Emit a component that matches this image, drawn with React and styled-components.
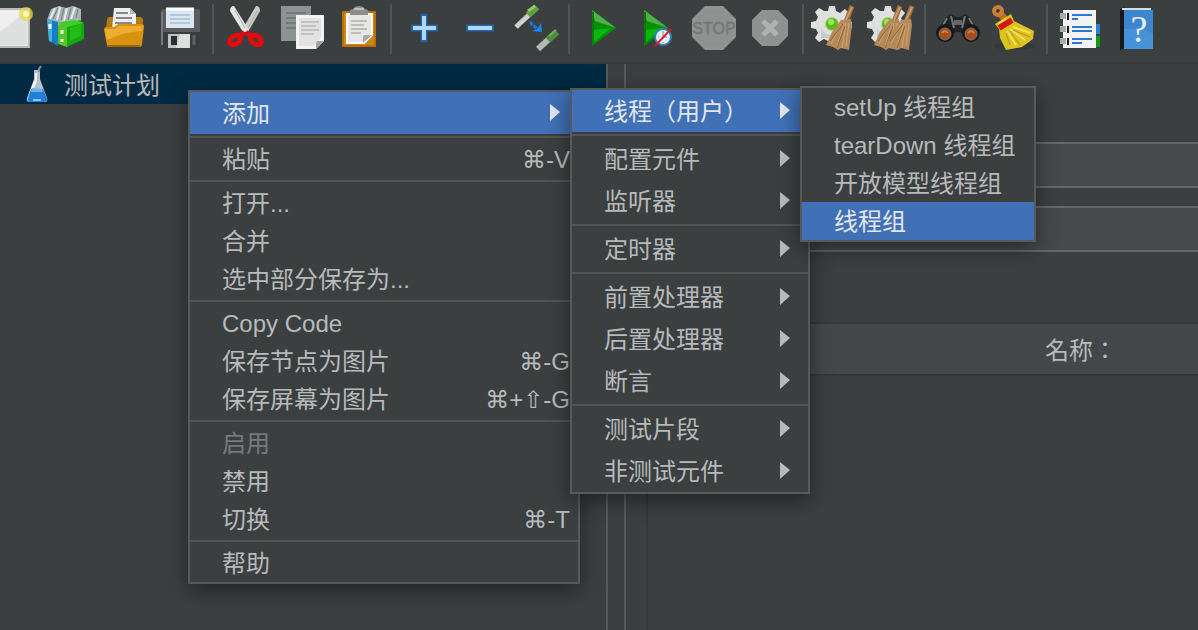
import React from 'react'
import styled, { createGlobalStyle } from 'styled-components'

const GlobalStyle = createGlobalStyle`
  * {
    box-sizing: border-box;
  }

  body {
    margin: 0;
    overflow: hidden;
    background: #3b3f40;
    color: #b7b9ba;
    font-family: "Liberation Sans", "Noto Sans CJK SC", "DejaVu Sans", sans-serif;
    font-size: 24px;
  }
`

const Window = styled.div`
  display: flex;
  flex-direction: column;
  min-height: 100vh;
`

const Toolbar = styled.header`
  display: flex;
  align-items: flex-start;
  height: 64px;
  margin-left: -16px;
  border-bottom: 2px solid #36393a;
`

const ToolButton = styled.button`
  flex: none;
  width: 56px;
  height: 56px;
  padding: 0;
  border: none;
  background: none;

  svg {
    display: block;
  }
`

const ToolDivider = styled.span`
  flex: none;
  width: 2px;
  height: 50px;
  margin: 4px 4px 0;
  background: #515556;
`

const Workspace = styled.div`
  display: flex;
  flex: 1;
`

const TreePane = styled.aside`
  flex: none;
  width: 606px;
`

const TreeRow = styled.div`
  display: flex;
  align-items: center;
  gap: 14px;
  height: 40px;
  padding-left: 24px;
  background: #012a42;

  svg {
    display: block;
  }
`

const TreeLabel = styled.span`
  padding-top: 4px;
  line-height: 36px;
`

const Splitter = styled.div`
  flex: none;
  width: 20px;
  border: solid #565a5b;
  border-width: 0 2px;
`

const Editor = styled.main`
  display: flex;
  flex: 1;
  flex-direction: column;
  min-width: 0;
  padding: 78px 0 0 20px;
`

const Fields = styled.div`
  display: flex;
  flex-direction: column;
  gap: 18px;
  margin-bottom: 70px;
  padding-left: 130px;
`

const Field = styled.input`
  width: 100%;
  height: 46px;
  border: solid #646869;
  border-width: 2px 0 2px 2px;
  outline: none;
  background: #45494a;
  color: inherit;
  font: inherit;
`

const TableFrame = styled.div`
  flex: 1;
  border-left: 2px solid #34383a;
`

const Table = styled.table`
  width: 100%;
  border-collapse: collapse;
`

const HeadCell = styled.th`
  height: 52px;
  padding: 4px 81px 0 0;
  border: solid #34383a;
  border-width: 2px 0;
  background: #44474a;
  font-family: "Liberation Sans", "Noto Sans CJK TC", sans-serif;
  font-weight: 400;
  line-height: 44px;
  text-align: right;
`

const Popup = styled.ul`
  position: absolute;
  top: ${({ $top }) => $top}px;
  left: ${({ $left }) => $left}px;
  width: ${({ $width }) => $width}px;
  margin: 0;
  padding: 0;
  border: 2px solid #565a5b;
  background: #3b3f40;
  box-shadow: 0 6px 20px rgba(0, 0, 0, 0.45);
  list-style: none;
`

const MenuButton = styled.button`
  display: flex;
  align-items: center;
  justify-content: space-between;
  width: 100%;
  height: ${({ $tall }) => ($tall ? 42 : 38)}px;
  padding: 0 8px 0 32px;
  border: none;
  background: ${({ $selected }) => ($selected ? '#4070b5' : 'none')};
  color: ${({ $selected }) => ($selected ? '#e2e6ec' : '#b7b9ba')};
  font: inherit;
  white-space: nowrap;

  &:disabled {
    color: #777a7b;
  }
`

const MenuLabel = styled.span`
  padding-top: 2px;
  line-height: 36px;
`

const Shortcut = styled(MenuLabel)`
  font-family: "Liberation Sans", "DejaVu Sans", sans-serif;
`

const MenuDivider = styled.li`
  height: 2px;
  margin: 2px 0;
  background: #515556;
`

const Arrow = styled.svg`
  flex: none;
  margin-right: 10px;
`

const NewIcon = () => (
  <>
    <rect x="8" y="9" width="37" height="38" fill="#e9e9e9" />
    <path d="M8 9h37v38H8" fill="none" stroke="#b9bbb9" strokeWidth="2" />
    <path d="M10 11h33v34H10z" fill="#dedfdf" />
    <path d="M10 11h33L10 36z" fill="#efefef" />
    <circle cx="42" cy="14" r="7" fill="#e8d94c" opacity="0.75" />
    <circle cx="42" cy="14" r="3" fill="#fffbb0" />
  </>
)

const TemplatesIcon = () => (
  <>
    <path d="M7 20 11 9l8-3 7 2 7-2 8 3v15L20 30z" fill="#a9b4b6" />
    <path d="m10 19 5-11M17 20l3-13M24 21l3-13M31 19l4-12" stroke="#e5eaea" strokeWidth="2" />
    <path d="m13 19 5-11M21 20l3-12M28 20l3-12M36 18l2-9" stroke="#6f7c80" strokeWidth="1" />
    <path d="m7 19 11 3v24l-9-5z" fill="#147fc0" />
    <path d="m7 19 5 1v22l-3-1z" fill="#49aee0" />
    <path d="M10 24v5" stroke="#eef7fb" strokeWidth="3" />
    <path d="m18 25 9-4v26l-9-3z" fill="#56c32b" />
    <path d="m27 24 13-4 4 4v15l-17 8z" fill="#13a80e" />
    <path d="m18 23 16-3 10 3-17 4z" fill="#40cf27" />
    <path d="m30 28 11-4v12l-11 5z" fill="#24bd18" />
    <path d="M22 30v4M22 39v3" stroke="#e1fad5" strokeWidth="3" />
  </>
)

const OpenIcon = () => (
  <>
    <path d="M11 20q0-3 3-3h30q3 0 3 3l-1 16H9z" fill="#b77912" />
    <path d="M18 8h16l6 6v15H16z" fill="#eeeeee" />
    <path d="m34 8 6 6h-6z" fill="#b8b8b8" />
    <path d="M20 13h12M20 18h16M19 23h17" stroke="#888" strokeWidth="2" />
    <path d="M8 30q0-3 3-3h7l4-3h24q2 0 2 3l-2 17q0 3-3 3H14q-3 0-3-2z" fill="#d9920f" />
    <path d="M9 29h10l4-3h24l-1 5q-19 1-35 9z" fill="#ecad30" />
    <path d="M12 46h32" stroke="#9c6508" strokeWidth="2" />
  </>
)

const SaveIcon = () => (
  <>
    <path d="M10 9h36q2 0 2 2v35l-3 3H12l-3-3V11z" fill="#5a5c5f" />
    <path d="M9 32h39v14l-3 3H12l-3-3z" fill="#3a3c3f" />
    <path d="M10 12v33" stroke="#77797c" strokeWidth="2" />
    <path d="M14 9h28v19H14z" fill="#dce7ef" />
    <path d="M14 9h28" stroke="#fff" strokeWidth="3" />
    <path d="M18 15h20M18 19h20M18 23h20" stroke="#87aace" strokeWidth="1" />
    <rect x="16" y="34" width="22" height="14" fill="#bfc1c3" />
    <path d="M28 34h10v14H24z" fill="#dedfdf" />
    <rect x="19" y="36" width="6" height="9" fill="#2c2e30" />
    <path d="M42 35v10" stroke="#5e6062" strokeWidth="3" />
  </>
)

const CutIcon = () => (
  <>
    <path d="M38 6q4 0 4 5L30 32l-6-2z" fill="#c9ccc7" />
    <path d="M16 6q-4 0-4 5l13 21 6-2z" fill="#e5e7e3" />
    <path d="m17 10 11 20M39 11 30 28" stroke="#a7aca5" strokeWidth="1" />
    <path d="m21 36 6-4 7 4" fill="none" stroke="#d31010" strokeWidth="5" />
    <ellipse cx="17" cy="40" rx="6" ry="4" transform="rotate(-35 17 40)" fill="none" stroke="#e00d0d" strokeWidth="5" />
    <ellipse cx="38" cy="40" rx="6" ry="4" transform="rotate(35 38 40)" fill="none" stroke="#e00d0d" strokeWidth="5" />
    <circle cx="27" cy="30" r="2" fill="#eee" />
  </>
)

const CopyIcon = () => (
  <>
    <rect x="7" y="6" width="30" height="35" fill="#8f9292" />
    <path d="M12 13h20M12 18h20M12 23h20M12 28h20" stroke="#757878" strokeWidth="2" />
    <path d="M22 15h28v26l-8 8H22z" fill="#f2f2f2" />
    <path d="M25 18h22v20l-8 8H25z" fill="#e2e2e2" />
    <path d="M27 22h18M27 26h15M27 30h18M27 34h13" stroke="#a2a2a2" strokeWidth="1" />
    <path d="M42 49v-6q0-2 2-2h6z" fill="#a1a3a3" />
  </>
)

const PasteIcon = () => (
  <>
    <rect x="12" y="11" width="34" height="36" rx="1" fill="#b96f04" />
    <rect x="14" y="13" width="30" height="32" fill="#cf8614" />
    <path d="M17 14h25v21l-8 8H17z" fill="#e6e6e5" stroke="#fff" strokeWidth="2" />
    <path d="M21 21h16M21 25h13M21 29h16M21 33h10" stroke="#929292" strokeWidth="1" />
    <path d="M33 43v-6q0-2 2-2h7z" fill="#aaa" />
    <path d="M20 15v-4q0-2 3-2 2-3 6-3t6 3q3 0 3 2v4z" fill="#8d8e8a" />
    <path d="M24 9h10" stroke="#bdbeb9" strokeWidth="2" />
  </>
)

const ExpandIcon = () => (
  <>
    <path d="M28 14v28M15 28h27" stroke="#1d66a9" strokeWidth="7" />
    <path d="M28 16v24M17 28h23" stroke="#b4d6f1" strokeWidth="4" />
  </>
)

const CollapseIcon = () => (
  <>
    <path d="M14 28h28" stroke="#1d66a9" strokeWidth="7" />
    <path d="M16 28h24" stroke="#b4d6f1" strokeWidth="4" />
  </>
)

const ToggleIcon = () => (
  <>
    <path d="m8 27 14-13" stroke="#d0d2cf" strokeWidth="5" />
    <path d="m7 25 13-12" stroke="#a5a9a5" strokeWidth="1" />
    <path d="m20 15 9-8" stroke="#5f9e43" strokeWidth="7" />
    <path d="m20 11 7-5" stroke="#8dcb6e" strokeWidth="3" />
    <path d="m30 49 11-10" stroke="#b4b7b3" strokeWidth="6" />
    <path d="m40 40 9-8" stroke="#4e8c3b" strokeWidth="7" />
    <path d="m41 36 7-6" stroke="#70af55" strokeWidth="2" />
    <path d="m22 22 7 7" stroke="#187ce6" strokeWidth="3" strokeDasharray="4 1" />
    <path d="m33 23 1 9-10-1 5-2z" fill="#1684f5" />
  </>
)

const PlayShape = () => (
  <>
    <path d="M18 10 42 28 18 46z" fill="#078f0a" />
    <path d="m18 10 24 18-21-7z" fill="#50b047" />
    <path d="m20 30 17-2-17 14z" fill="#09b90b" />
    <path d="M19 12v32" stroke="#087b08" strokeWidth="2" />
  </>
)

const RunNoPauseIcon = () => (
  <>
    <g transform="translate(-4 0)">
      <PlayShape />
    </g>
    <circle cx="33" cy="37" r="8" fill="#e5f1f9" stroke="#2c81b9" strokeWidth="2" />
    <path d="M33 31v6h4M28 37h1M33 42v1" stroke="#70879a" strokeWidth="1" fill="none" />
    <path d="m25 46 16-17" stroke="#db2020" strokeWidth="2" />
  </>
)

const StopIcon = () => (
  <>
    <path d="M19 6h18l13 13v18L37 50H19L6 37V19z" fill="#8f9191" />
    <path d="M20 8h16l12 12v16L36 48H20L8 36V20z" fill="none" stroke="#979999" strokeWidth="1" />
    <text x="28" y="34" textAnchor="middle" fontSize="16" fill="#757777" stroke="#757777" strokeWidth="0.5">STOP</text>
  </>
)

const ShutdownIcon = () => (
  <>
    <path d="M20 10h16l10 10v16L36 46H20L10 36V20z" fill="#909292" />
    <path d="m21 21 14 14m0-14L21 35" stroke="#b0b2b2" strokeWidth="5" />
  </>
)

const GearShape = () => (
  <>
    <path
      d="m20 11 1-5h6l1 5 4 2 5-4 4 4-4 5 2 4h5v6l-5 1-2 4 3 5-4 4-4-3-5 2v5h-6l-1-5-4-2-5 3-4-4 3-5-2-4-5-1v-6l5-1 2-4-3-5 4-4 5 3z"
      fill="#dfe1df"
    />
    <path d="M13 28a12 12 0 0 0 22 0v10H13z" fill="#c9ccc9" />
    <circle cx="24" cy="24" r="7" fill="#b6c5a8" />
    <circle cx="24" cy="24" r="6" fill="#5dbc13" />
    <circle cx="23" cy="22" r="3" fill="#9be755" />
  </>
)

const BrushShape = () => (
  <>
    <path d="m38 22 6-16" stroke="#9a6b3e" strokeWidth="5" />
    <path d="m38 20 6-13" stroke="#c99c6c" strokeWidth="2" />
    <path d="m33 20 10-1 1 6-3 25-8-2-3 2-5-3-7-2 6-13z" fill="#b58a5a" />
    <path d="m33 24-10 20m13-21-7 24m9-24-4 25m7-25-3 23" stroke="#cda676" strokeWidth="1" />
    <path d="m35 24-13 17m15-15-8 22" stroke="#8f6339" strokeWidth="1" />
  </>
)

const ClearIcon = () => (
  <>
    <GearShape />
    <BrushShape />
  </>
)

const ClearAllIcon = () => (
  <>
    <GearShape />
    <g transform="translate(-8 0)">
      <BrushShape />
    </g>
    <g transform="translate(4 0)">
      <BrushShape />
    </g>
  </>
)

const SearchIcon = () => (
  <>
    <path d="m16 17 5-3 5 3h4l5-3 5 3 9 15-9 7-10-7h-4l-10 7-9-7z" fill="#202223" />
    <path d="m17 18-6 11M39 18l6 11M21 16l3 12M35 16l-3 12" stroke="#727678" strokeWidth="2" />
    <path d="M24 20h8v5h-8z" fill="#626668" />
    <circle cx="15" cy="33" r="9" fill="#17191a" />
    <circle cx="41" cy="33" r="9" fill="#17191a" />
    <circle cx="15" cy="34" r="6" fill="#a84e1d" stroke="#757575" strokeWidth="1" />
    <circle cx="41" cy="34" r="6" fill="#a84e1d" stroke="#757575" strokeWidth="1" />
    <path d="M12 33q3-4 6 0M38 33q3-4 6 0" stroke="#d07c3c" strokeWidth="2" fill="none" />
  </>
)

const BroomIcon = () => (
  <>
    <ellipse cx="28" cy="46" rx="20" ry="4" fill="#34383a" />
    <path d="m13 12 8 10" stroke="#bf731c" strokeWidth="7" />
    <circle cx="12" cy="11" r="4" fill="none" stroke="#c98034" strokeWidth="4" />
    <path d="m9 24 16-10 3 7 20 10-1 8-11 8-16 3-6-12-1-9z" fill="#dcc31f" />
    <path d="m27 27 17 6m-20-4 15 11m-18-9 9 14" stroke="#f3e15a" strokeWidth="2" />
    <path d="m27 30 17 7m-20-6 10 14m-14-12 4 12" stroke="#b39413" strokeWidth="1" />
    <path d="m13 28 13-8" stroke="#d31816" strokeWidth="6" />
    <path d="m13 23 7-4" stroke="#f4dc48" strokeWidth="2" />
  </>
)

const FunctionIcon = () => (
  <>
    <path d="M42 24h6v10h-6z" fill="#287fd8" />
    <path d="M42 36h6v11h-6z" fill="#119916" />
    <rect x="11" y="10" width="33" height="38" fill="#f3f3f3" />
    <path d="M8 16h6M8 29h6M8 41h6" stroke="#a9abac" strokeWidth="6" />
    <path d="M16 13v7M16 26v7M16 38v7" stroke="#171819" strokeWidth="2" />
    <path d="M20 15h20M20 19h6M20 27h20M20 31h20M20 39h20M20 43h10" stroke="#2977d2" strokeWidth="2" />
  </>
)

const HelpIcon = () => (
  <>
    <path d="m12 9 5-2v41l-5 2z" fill="#17191b" />
    <path d="M16 10h29v39H16z" fill="#3d86cd" />
    <path d="M16 29q20-2 29 5v15H16z" fill="#4691d7" />
    <path d="M14 9h29" stroke="#d4dce4" strokeWidth="2" />
    <text x="31" y="42" textAnchor="middle" fontFamily="Liberation Serif, serif" fontSize="38" fill="#e4f1fc">?</text>
  </>
)

const toolGroups = [
  [
    { label: '新建', icon: NewIcon },
    { label: '模板', icon: TemplatesIcon },
    { label: '打开', icon: OpenIcon },
    { label: '保存', icon: SaveIcon },
  ],
  [
    { label: '剪切', icon: CutIcon },
    { label: '复制', icon: CopyIcon },
    { label: '粘贴', icon: PasteIcon },
  ],
  [
    { label: '展开', icon: ExpandIcon },
    { label: '收起', icon: CollapseIcon },
    { label: '切换', icon: ToggleIcon },
  ],
  [
    { label: '启动', icon: PlayShape },
    { label: '不停顿开始', icon: RunNoPauseIcon },
    { label: '停止', icon: StopIcon, disabled: true },
    { label: '关闭', icon: ShutdownIcon, disabled: true },
  ],
  [
    { label: '清除', icon: ClearIcon },
    { label: '清除全部', icon: ClearAllIcon },
  ],
  [
    { label: '查找', icon: SearchIcon },
    { label: '重置搜索', icon: BroomIcon },
  ],
  [
    { label: '函数助手', icon: FunctionIcon },
    { label: '帮助', icon: HelpIcon },
  ],
]

const planMenu = [
  [{ label: '添加', sub: true, selected: true }],
  [{ label: '粘贴', keys: '⌘-V' }],
  [{ label: '打开...' }, { label: '合并' }, { label: '选中部分保存为...' }],
  [
    { label: 'Copy Code' },
    { label: '保存节点为图片', keys: '⌘-G' },
    { label: '保存屏幕为图片', keys: '⌘+⇧-G' },
  ],
  [{ label: '启用', disabled: true }, { label: '禁用' }, { label: '切换', keys: '⌘-T' }],
  [{ label: '帮助' }],
]

const addMenu = [
  [{ label: '线程（用户）', sub: true, selected: true }],
  [{ label: '配置元件', sub: true }, { label: '监听器', sub: true }],
  [{ label: '定时器', sub: true }],
  [
    { label: '前置处理器', sub: true },
    { label: '后置处理器', sub: true },
    { label: '断言', sub: true },
  ],
  [{ label: '测试片段', sub: true }, { label: '非测试元件', sub: true }],
]

const threadMenu = [
  [
    { label: 'setUp 线程组' },
    { label: 'tearDown 线程组' },
    { label: '开放模型线程组' },
    { label: '线程组', selected: true },
  ],
]

function Menu({ label, groups, top, left, width }) {
  return (
    <Popup role="menu" aria-label={label} $top={top} $left={left} $width={width}>
      {groups.map((group, index) => (
        <React.Fragment key={group[0].label}>
          {index > 0 && <MenuDivider role="separator" />}
          {group.map(item => (
            <li key={item.label} role="none">
              <MenuButton
                type="button"
                role="menuitem"
                disabled={item.disabled}
                aria-haspopup={item.sub ? 'menu' : undefined}
                $tall={item.sub}
                $selected={item.selected}
              >
                <MenuLabel>{item.label}</MenuLabel>
                {item.keys && <Shortcut>{item.keys}</Shortcut>}
                {item.sub && (
                  <Arrow width="10" height="18" viewBox="0 0 10 18">
                    <path d="M0 0 10 8 0 17z" fill="currentColor" />
                  </Arrow>
                )}
              </MenuButton>
            </li>
          ))}
        </React.Fragment>
      ))}
    </Popup>
  )
}

function App() {
  return (
    <Window>
      <GlobalStyle />
      <Toolbar>
        {toolGroups.map((group, index) => (
          <React.Fragment key={group[0].label}>
            {index > 0 && <ToolDivider />}
            {group.map(({ label, icon: Icon, disabled }) => (
              <ToolButton key={label} type="button" aria-label={label} disabled={disabled}>
                <svg width="56" height="56" viewBox="0 0 56 56">
                  <Icon />
                </svg>
              </ToolButton>
            ))}
          </React.Fragment>
        ))}
      </Toolbar>
      <Workspace>
        <TreePane>
          <TreeRow>
            <svg width="26" height="40" viewBox="0 0 26 40">
              <path d="M10 6h6v9l7 19q1 4-2 4H5q-3 0-2-4l7-19z" fill="#b4c0ca" />
              <path d="M11 9h2v8L8 29H5l6-14z" fill="#f2f5f7" />
              <path d="m7 25 12 0 4 10q0 3-3 3H6q-3 0-2-3z" fill="#1f7fdb" />
              <path d="m8 24 10 1 1 3H7z" fill="#6db0ea" />
              <path d="M9 36h8" stroke="#8dc8f5" strokeWidth="2" />
              <path d="M15 8V5l2-3" stroke="#8c959c" strokeWidth="2" fill="none" />
            </svg>
            <TreeLabel>测试计划</TreeLabel>
          </TreeRow>
        </TreePane>
        <Splitter />
        <Editor>
          <Fields>
            <Field type="text" aria-label="名称" />
            <Field type="text" aria-label="注释" />
          </Fields>
          <TableFrame>
            <Table>
              <thead>
                <tr>
                  <HeadCell scope="col">名称：</HeadCell>
                </tr>
              </thead>
            </Table>
          </TableFrame>
        </Editor>
      </Workspace>
      <Menu label="测试计划" groups={planMenu} top={90} left={188} width={392} />
      <Menu label="添加" groups={addMenu} top={88} left={570} width={240} />
      <Menu label="线程（用户）" groups={threadMenu} top={86} left={800} width={236} />
    </Window>
  )
}

export default App
